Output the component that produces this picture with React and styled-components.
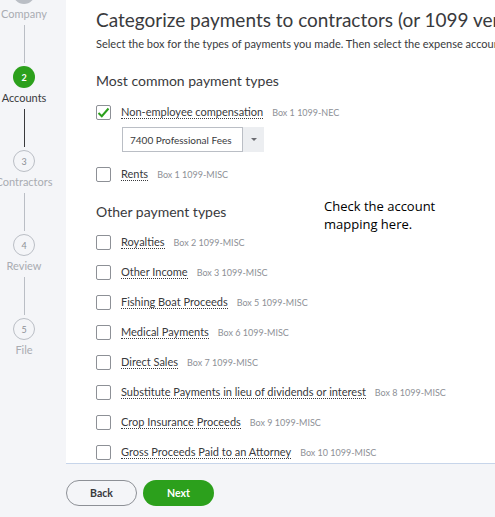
import React from "react";
import styled, { createGlobalStyle } from "styled-components";

const Global = createGlobalStyle`
  html, body { margin: 0; padding: 0; background: #f4f5f8; }
  body { font-family: Lato, "Noto Sans", sans-serif; color: #393a3d; }
  #root { width: 495px; height: 517px; overflow: hidden; }
`;

const Page = styled.div`
  display: flex;
  width: 495px;
  height: 517px;
  overflow: hidden;
  background: #f4f5f8;
`;

const Sidebar = styled.div`
  width: 66px;
  flex: none;
  display: flex;
  flex-direction: column;
  align-items: flex-start;
  margin-top: -18px;
`;

const Step = styled.div`
  width: 48px;
  display: flex;
  flex-direction: column;
  align-items: center;
`;

const Circle = styled.div`
  width: 22px;
  height: 22px;
  box-sizing: border-box;
  border-radius: 50%;
  display: flex;
  align-items: center;
  justify-content: center;
  font-size: 9px;
  font-weight: ${(p) => (p.$active ? 700 : 400)};
  background: ${(p) => (p.$active ? "#2ca01c" : p.$done ? "#babec5" : "transparent")};
  border: ${(p) => (p.$active || p.$done ? "none" : "1px solid #babec5")};
  color: ${(p) => (p.$active ? "#fff" : "#8d9096")};
`;

const StepLabel = styled.div`
  margin-top: 3px;
  height: 14px;
  line-height: 14px;
  font-size: 11px;
  white-space: nowrap;
  color: ${(p) => (p.$active ? "#393a3d" : "#a9acb2")};
`;

const Connector = styled.div`
  width: 1px;
  height: 38px;
  margin-top: 4px;
  margin-bottom: 3px;
  background: ${(p) => (p.$dark ? "#393a3d" : "#babec5")};
`;

const Main = styled.div`
  flex: 1;
  min-width: 0;
  display: flex;
  flex-direction: column;
`;

const Panel = styled.div`
  position: relative;
  height: 464px;
  box-sizing: border-box;
  background: #fff;
  border-bottom: 1px solid #c7d5ea;
  padding: 8px 0 0 30px;
  overflow: hidden;
  white-space: nowrap;
`;

const Title = styled.h1`
  margin: 0;
  font-size: 19px;
  line-height: 24px;
  font-weight: 400;
  color: #393a3d;
`;

const Subtitle = styled.p`
  margin: 5px 0 0;
  font-size: 11px;
  line-height: 14px;
  color: #393a3d;
`;

const SectionTitle = styled.h2`
  margin: ${(p) => p.$top}px 0 0;
  font-size: 14px;
  line-height: 18px;
  font-weight: 400;
  color: #393a3d;
`;

const List = styled.div`
  display: flex;
  flex-direction: column;
  margin-top: ${(p) => p.$top}px;
`;

const Row = styled.div`
  display: flex;
  align-items: center;
  height: 30px;
  margin-top: ${(p) => p.$top || 0}px;
`;

const Box = styled.span`
  width: 15px;
  height: 15px;
  box-sizing: border-box;
  flex: none;
  border: 1px solid #8d9096;
  border-radius: 2px;
  background: #fff;
  display: flex;
  align-items: center;
  justify-content: center;
`;

const Label = styled.span`
  margin-left: 10px;
  font-size: 11px;
  line-height: 13px;
  color: #393a3d;
  border-bottom: 1px dotted #393a3d;
`;

const BoxRef = styled.span`
  margin-left: 9px;
  font-size: 9px;
  color: #8d9096;
`;

const SelectWrap = styled.div`
  display: flex;
  margin: 0 0 0 26px;
  height: 25px;
`;

const SelectField = styled.div`
  width: 121px;
  box-sizing: border-box;
  border: 1px solid #babec5;
  display: flex;
  align-items: center;
  padding-left: 7px;
  font-size: 10px;
  color: #393a3d;
`;

const SelectArrow = styled.div`
  width: 21px;
  background: #eceef1;
  display: flex;
  align-items: center;
  justify-content: center;
`;

const Caret = styled.span`
  width: 0;
  height: 0;
  border-left: 3px solid transparent;
  border-right: 3px solid transparent;
  border-top: 3px solid #6b6c72;
`;

const Note = styled.div`
  position: absolute;
  left: 258px;
  top: 197px;
  font-family: "Open Sans", "Noto Sans", sans-serif;
  font-size: 13px;
  line-height: 18px;
  color: #000;
  white-space: normal;
  width: 150px;
`;

const Footer = styled.div`
  display: flex;
  gap: 6px;
  padding-top: 16px;
`;

const Button = styled.button`
  width: 71px;
  height: 26px;
  border-radius: 13px;
  font-family: Lato, "Noto Sans", sans-serif;
  font-size: 10.5px;
  font-weight: 700;
  cursor: pointer;
  padding: 0;
  border: ${(p) => (p.$primary ? "none" : "1px solid #8d9096")};
  background: ${(p) => (p.$primary ? "#2ca01c" : "transparent")};
  color: ${(p) => (p.$primary ? "#fff" : "#393a3d")};
`;

const Check = () => (
  <svg width="13" height="11" viewBox="0 0 13 11">
    <path d="M1.5 6 L4.8 9.2 L11.5 1.5" fill="none" stroke="#2ca01c" strokeWidth="2" />
  </svg>
);

const steps = [
  { n: 1, label: "Company", done: true },
  { n: 2, label: "Accounts", active: true },
  { n: 3, label: "Contractors" },
  { n: 4, label: "Review" },
  { n: 5, label: "File" },
];

const others = [
  ["Royalties", "Box 2 1099-MISC"],
  ["Other Income", "Box 3 1099-MISC"],
  ["Fishing Boat Proceeds", "Box 5 1099-MISC"],
  ["Medical Payments", "Box 6 1099-MISC"],
  ["Direct Sales", "Box 7 1099-MISC"],
  ["Substitute Payments in lieu of dividends or interest", "Box 8 1099-MISC"],
  ["Crop Insurance Proceeds", "Box 9 1099-MISC"],
  ["Gross Proceeds Paid to an Attorney", "Box 10 1099-MISC"],
];

export default function App() {
  return (
    <Page>
      <Global />
      <Sidebar>
        {steps.map((s, i) => (
          <Step key={s.n}>
            <Circle $active={s.active} $done={s.done}>
              {s.done ? "" : s.n}
            </Circle>
            <StepLabel $active={s.active}>{s.label}</StepLabel>
            {i < steps.length - 1 && <Connector $dark={s.active} />}
          </Step>
        ))}
      </Sidebar>
      <Main>
        <Panel>
          <Title>Categorize payments to contractors (or 1099 vendors)</Title>
          <Subtitle>
            Select the box for the types of payments you made. Then select the expense account you use to track them.
          </Subtitle>
          <SectionTitle $top={21}>Most common payment types</SectionTitle>
          <List $top={7}>
            <Row>
              <Box>
                <Check />
              </Box>
              <Label>Non-employee compensation</Label>
              <BoxRef>Box 1 1099-NEC</BoxRef>
            </Row>
            <SelectWrap>
              <SelectField>7400 Professional Fees</SelectField>
              <SelectArrow>
                <Caret />
              </SelectArrow>
            </SelectWrap>
            <Row $top={7}>
              <Box />
              <Label>Rents</Label>
              <BoxRef>Box 1 1099-MISC</BoxRef>
            </Row>
          </List>
          <SectionTitle $top={14}>Other payment types</SectionTitle>
          <List $top={6}>
            {others.map(([l, b]) => (
              <Row key={l}>
                <Box />
                <Label>{l}</Label>
                <BoxRef>{b}</BoxRef>
              </Row>
            ))}
          </List>
          <Note>Check the account mapping here.</Note>
        </Panel>
        <Footer>
          <Button>Back</Button>
          <Button $primary>Next</Button>
        </Footer>
      </Main>
    </Page>
  );
}
